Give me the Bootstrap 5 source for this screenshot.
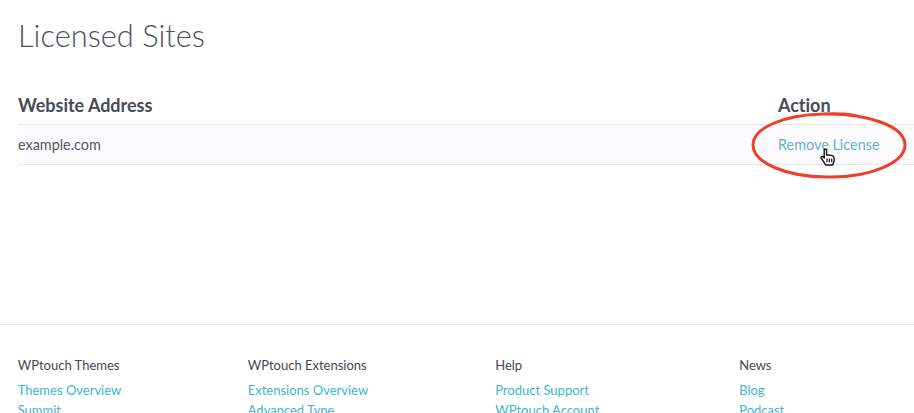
<!DOCTYPE html>
<html lang="en">
<head>
<meta charset="utf-8">
<title>Licensed Sites</title>
<link href="https://cdn.jsdelivr.net/npm/bootstrap@5.3.0/dist/css/bootstrap.min.css" rel="stylesheet">
<style>
html,body{height:413px;overflow:hidden}
body{font-family:Lato,sans-serif;color:#3c3f48;background:#fff}
.page-main{padding:0 0 0 18px;height:324px}
.page-title{font-weight:300;font-size:30.8px;line-height:38px;margin:0;padding-top:17px;color:#4c515d}
.sites-head{display:flex;margin-top:31px;height:38px;font-size:18px;letter-spacing:-.03px;font-weight:700;line-height:22px;color:#474b56;padding-top:8px}
.sites-row{display:flex;height:41px;background:#fcfcfe;border-top:1px solid #e9e9e9;border-bottom:1px solid #e9e9e9;font-size:14.4px;line-height:39px;color:#55585e}
.col-site{width:760px;flex:none}
.row-site{width:760px;flex:none}
.remove-link{color:#62b1d5;text-decoration:none}
.action-cell{position:relative}
.oval-mark{position:absolute;left:-29px;top:-25px;pointer-events:none}
.hand-cursor{position:absolute;left:42px;top:23px}
.page-foot{border-top:1px solid #e9e9e9;height:89px;padding-top:31px;font-size:13px;line-height:19px;display:flex;overflow:hidden}
.foot-col{flex:none}
.foot-col a{display:block;color:#3bb6d5;text-decoration:none;margin-bottom:.5px}
.foot-title{color:#454852;margin-bottom:6px}
.fc1{width:230px;margin-left:17.7px}.fc2{width:247.5px}.fc3{width:244px}.fc4{width:150px}
</style>
</head>
<body>
<main class="page-main">
<h1 class="page-title">Licensed Sites</h1>
<div class="sites-head"><div class="col-site">Website Address</div><div>Action</div></div>
<div class="sites-row"><div class="row-site">example.com</div><div class="action-cell"><a class="remove-link" href="#">Remove License</a>
<svg class="oval-mark" width="160" height="90" viewBox="0 0 160 90"><path d="M74 14C118 13 156 26 156 45C156 63 120 78 78 77C38 77 4 63 4 45C4 28 34 15 74 14C90 13 100 14 108 16" fill="none" stroke="#ef3f28" stroke-width="3" stroke-linecap="round"/></svg>
<svg class="hand-cursor" width="15" height="18" viewBox="0 0 16 19"><path d="M4.500 1.500C5.500.5 7 1 7 2.500V7.500L9 7.200 11 7.500 13 8C14.500 8.500 15 9.500 15 11V14L13.500 18H6L4.500 15.500 1.500 11C.5 9.500 2 8 3.500 9.500L4.500 10.500Z" fill="#fff" stroke="#111" stroke-width="1.500" stroke-linejoin="round"/><path d="M7.500 11V15M10 11V15M12.500 11V15" stroke="#111" stroke-width="1.300"/></svg>
</div></div>
</main>
<footer class="page-foot">
<div class="foot-col fc1"><div class="foot-title">WPtouch Themes</div><a href="#">Themes Overview</a><a href="#">Summit</a></div>
<div class="foot-col fc2"><div class="foot-title">WPtouch Extensions</div><a href="#">Extensions Overview</a><a href="#">Advanced Type</a></div>
<div class="foot-col fc3"><div class="foot-title">Help</div><a href="#">Product Support</a><a href="#">WPtouch Account</a></div>
<div class="foot-col fc4"><div class="foot-title">News</div><a href="#">Blog</a><a href="#">Podcast</a></div>
</footer>
<script src="https://cdn.jsdelivr.net/npm/bootstrap@5.3.0/dist/js/bootstrap.bundle.min.js"></script>
</body>
</html>
